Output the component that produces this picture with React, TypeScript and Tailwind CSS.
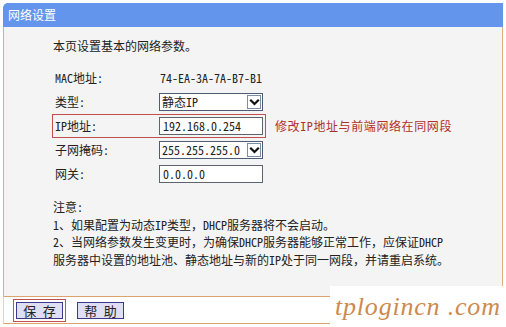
import React from 'react';

function Chevron() {
  return (
    <svg width="11" height="10" viewBox="0 0 11 10" fill="none">
      <polyline points="2,3.5 5.5,7 9,3.5" stroke="#111" strokeWidth="2.2" strokeLinecap="square" />
    </svg>
  );
}

function SelectBox({ value }: { value: string }) {
  return (
    <div className="flex h-[18px] w-[104px] items-stretch border border-[#4d5d73] bg-white">
      <span className="flex-1 pl-[2px] leading-[16px]">{value}</span>
      <span className="m-[1px] flex w-[14px] items-center justify-center border border-[#7d8ea3] bg-white">
        <Chevron />
      </span>
    </div>
  );
}

function TextBox({ value }: { value: string }) {
  return (
    <div className="h-[18px] w-[104px] border border-[#5c6470] bg-white pl-[3px] leading-[16px]">
      {value}
    </div>
  );
}

function Row({ label, children }: { label: string; children: React.ReactNode }) {
  return (
    <div className="flex h-[18px] items-center">
      <span className="w-[104px]">{label}</span>
      {children}
    </div>
  );
}

export default function App() {
  return (
    <div className="relative h-[327px] w-[506px] overflow-hidden bg-white pt-[3px] font-['Noto_Sans_Mono_CJK_SC','Noto_Sans_CJK_SC',sans-serif] text-[12px] text-[#222]">
      <div className="ml-[3px] w-[500px]">
        {/* Title bar */}
        <div className="flex h-[24px] items-center rounded-tl-[5px] bg-[#6495ed] pl-[5px] text-[12px] text-white">
          网络设置
        </div>

        {/* Body */}
        <div className="h-[269px] border-x border-[#e0b07c] bg-[#f4f4f4] pl-[49px] pt-[11px]">
          <p className="leading-[16px]">本页设置基本的网络参数。</p>

          <div className="ml-[2px] mt-[15px] flex flex-col gap-[6px]">
            <Row label="MAC地址:">
              <span className="pl-[1px]">74-EA-3A-7A-B7-B1</span>
            </Row>
            <Row label="类型:">
              <SelectBox value="静态IP" />
            </Row>
            <div className="flex h-[18px] items-center">
              <div className="flex items-center outline outline-1 outline-offset-[2px] outline-[#c0504d]">
                <span className="w-[104px]">IP地址:</span>
                <TextBox value="192.168.0.254" />
              </div>
              <span className="ml-[12px] tracking-[0.6px] text-[#b0302c]">修改IP地址与前端网络在同网段</span>
            </div>
            <Row label="子网掩码:">
              <SelectBox value="255.255.255.0" />
            </Row>
            <Row label="网关:">
              <TextBox value="0.0.0.0" />
            </Row>
          </div>

          <div className="mt-[15px] leading-[17.5px]">
            <p>注意:</p>
            <p>1、如果配置为动态IP类型，DHCP服务器将不会启动。</p>
            <p>2、当网络参数发生变更时，为确保DHCP服务器能够正常工作，应保证DHCP</p>
            <p>服务器中设置的地址池、静态地址与新的IP处于同一网段，并请重启系统。</p>
          </div>
        </div>

        {/* Footer */}
        <div className="flex h-[28px] items-center border-x border-y border-x-[#ecd2ac] border-y-[#dba46c] pl-[9px]">
          <div className="border border-[#c0504d] p-[2px]">
            <button className="flex h-[17px] w-[47px] items-center justify-center border border-[#3a3a8c] bg-[#dedef4] text-[13px] leading-none">
              保 存
            </button>
          </div>
          <button className="ml-[11px] flex h-[17px] w-[47px] items-center justify-center border border-[#3a3a8c] bg-[#dedef4] text-[13px] leading-none">
            帮 助
          </button>
        </div>
      </div>

      {/* Watermark */}
      <div className="absolute bottom-0 right-0 flex h-[41px] w-[176px] items-center bg-white pl-[5px]">
        <span className="whitespace-pre font-['Liberation_Serif',serif] text-[26px] italic tracking-[0.8px] text-[#cc8a4e]">
          tplogincn .com
        </span>
      </div>
    </div>
  );
}
